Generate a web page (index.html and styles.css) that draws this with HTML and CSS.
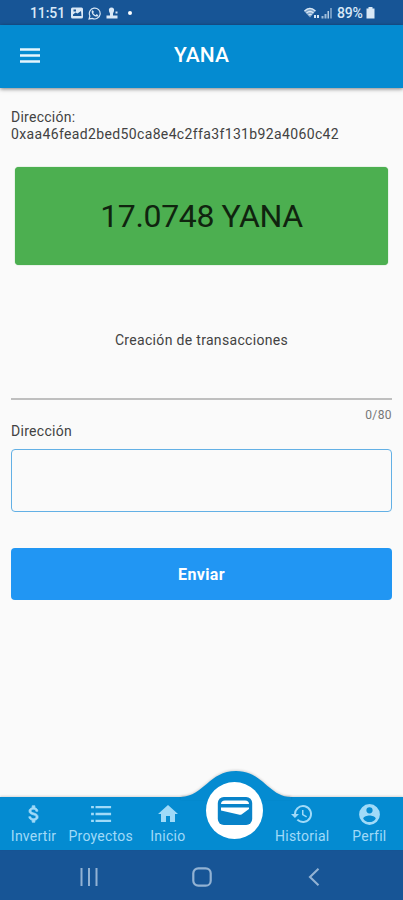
FILE: index.html
```
<!DOCTYPE html>
<html lang="es">
<head>
<meta charset="utf-8">
<title>YANA</title>
<link rel="stylesheet" href="styles.css">
</head>
<body>
<div class="screen">
  <div class="status">
    <span class="clock">11:51</span>
    <svg class="i-image" viewBox="0 0 24 24" width="12" height="12"><path fill="currentColor" fill-rule="evenodd" d="M3 1h18a3 3 0 0 1 3 3v16a3 3 0 0 1-3 3H3a3 3 0 0 1-3-3V4a3 3 0 0 1 3-3zm1 17h17l-1-10-7 5-4-2-5 4zM5 5v4h5V5z"/></svg>
    <svg class="i-chat" viewBox="0 0 24 24" width="13" height="13"><path d="M2 22l1.500-5.500A10 10 0 1 1 8 21z" fill="none" stroke="currentColor" stroke-width="2.200"/><path d="M7 7l2-1 2 3-1.500 2c1 2 2.500 3 4.500 4l2-2 3 2c-1 4-5 3-8 1S6 11 7 7z" fill="currentColor"/></svg>
    <svg class="i-person" viewBox="0 0 26 24" width="13" height="12"><path fill="currentColor" d="M11 1c4 0 6 3 5 7-.4 2-2 4-2 6v3h9v6H1v-6h7v-3c0-2-2-4-2-6-1-4 1-7 5-7zM19 9h4v4h-4z"/></svg>
    <span class="dot"></span>
    <div class="status-right">
      <svg viewBox="0 0 32 24" width="16" height="12"><path d="M0 8Q11-5 23 8L12 21z" fill="currentColor" opacity=".55"/><path d="M1 8Q12-3 23 8M5 12q7-6 14 0M9 16q4-3 6 0" fill="none" stroke="currentColor" stroke-width="2.500"/><path d="M20 16h4v6h-4zM26 16h4v6h-4z" fill="currentColor"/></svg>
      <svg viewBox="0 0 22 24" width="11" height="12"><g fill="currentColor"><path opacity=".7" d="M1 18h4v5H1zM7 14h4v9H7z"/><path opacity=".8" d="M13 8h3v15h-3z"/><path opacity=".45" d="M18 2h4v21h-4z"/></g></svg>
      <span class="percent">89%</span>
      <svg viewBox="0 0 18 24" width="9" height="12"><path fill="currentColor" d="M5 0h8v3h4v20H1V3h4z"/></svg>
    </div>
  </div>
  <header class="appbar">
    <svg class="menu" viewBox="0 0 20 15" width="20" height="15"><path d="M0 1.500h20M0 7.500h20M0 13.500h20" stroke="currentColor" stroke-width="2.400"/></svg>
    <h1>YANA</h1>
  </header>
  <main>
    <p class="address">Dirección:<br><span>0xaa46fead2bed50ca8e4c2ffa3f131b92a4060c42</span></p>
    <div class="balance"><span>17.0748 YANA</span></div>
    <h2>Creación de transacciones</h2>
    <div class="line"></div>
    <div class="counter">0/80</div>
    <div class="label">Dirección</div>
    <div class="field"></div>
    <div class="send"><span>Enviar</span></div>
  </main>
  <nav class="tabs">
    <svg class="hump" viewBox="0 0 110 30" width="110" height="30"><path d="M0 27C23 26 28 1 55 1s32 25 55 26v3H0z" fill="#048bd1"/></svg>
    <div class="tab"><svg viewBox="0 0 24 24" width="22" height="22"><path fill="currentColor" stroke="currentColor" stroke-width=".8" d="M11.800 10.900c-2.270-.59-3-1.200-3-2.150 0-1.090 1.010-1.850 2.700-1.850 1.780 0 2.440.85 2.500 2.100h2.210c-.07-1.720-1.120-3.300-3.210-3.810V3h-3v2.160c-1.940.42-3.500 1.680-3.500 3.610 0 2.310 1.910 3.460 4.700 4.130 2.500.6 3 1.480 3 2.410 0 .69-.49 1.790-2.700 1.790-2.060 0-2.870-.92-2.980-2.100h-2.200c.12 2.190 1.760 3.420 3.680 3.830V21h3v-2.150c1.950-.37 3.500-1.500 3.500-3.550 0-2.840-2.430-3.810-4.700-4.400z"/></svg><span>Invertir</span></div>
    <div class="tab"><svg viewBox="0 0 24 24" width="22" height="22"><path d="M1.200 4.500h3M1.200 12h3M1.200 19.500h3M6 4.500h17M6 12h17M6 19.500h17" stroke="currentColor" stroke-width="2.500"/></svg><span>Proyectos</span></div>
    <div class="tab"><svg viewBox="0 0 24 24" width="24" height="24"><path fill="currentColor" d="M10 20v-6h4v6h5v-8h3L12 3 2 12h3v8z"/></svg><span>Inicio</span></div>
    <div class="tab"><div class="disc"><svg viewBox="0 0 36 30" width="36" height="30"><rect x=".8" y="1" width="34.400" height="28" rx="6" fill="#0883c9"/><path d="M4 8q0-3.500 4-3.500h20q4 0 4 3.500zM4 11.500h28v1.500l-7.500 5.500q-1.500.6-3 0L4 14.500z" fill="#fff"/></svg></div></div>
    <div class="tab"><svg viewBox="0 0 24 24" width="24" height="24"><path fill="currentColor" d="M13 3a9 9 0 0 0-9 9H1l3.890 3.890.07.14L9 12H6a7 7 0 1 1 2.060 4.940l-1.420 1.420A9 9 0 1 0 13 3zm-1 5v5l4.280 2.540.72-1.210-3.500-2.080V8z"/></svg><span>Historial</span></div>
    <div class="tab"><svg viewBox="0 0 24 24" width="25" height="25"><path fill="currentColor" d="M12 2a10 10 0 1 0 0 20 10 10 0 0 0 0-20zm0 3a3 3 0 1 1 0 6 3 3 0 0 1 0-6zm0 14.200a7.200 7.200 0 0 1-6-3.220c.03-1.990 4-3.080 6-3.080s5.970 1.090 6 3.080a7.200 7.200 0 0 1-6 3.220z"/></svg><span>Perfil</span></div>
  </nav>
  <div class="system">
    <svg viewBox="0 0 18 18" width="18" height="18"><path d="M1.500 0v18M9 0v18M16.500 0v18" stroke="currentColor" stroke-width="2"/></svg>
    <svg viewBox="0 0 20 20" width="20" height="20"><rect x="1.300" y="1.300" width="17.400" height="17.400" rx="5" fill="none" stroke="currentColor" stroke-width="2.200"/></svg>
    <svg viewBox="0 0 12 18" width="12" height="18"><path d="M10.500.8L2 9l8.500 8.200" fill="none" stroke="currentColor" stroke-width="2.100"/></svg>
  </div>
</div>
</body>
</html>
```
FILE: styles.css
```
* { box-sizing: border-box; }
body { margin: 0; font-family: Roboto, sans-serif; background: #fafafa; }
svg { display: block; flex: none; }
.screen { width: 403px; height: 900px; display: flex; flex-direction: column; background: #fafafa; overflow: hidden; }

.status { height: 25px; flex: none; background: #175596; color: #d9e8f6; display: flex; align-items: center; padding: 1px 28px 0 30px; }
.clock { font-size: 14px; font-weight: 500; width: 35px; letter-spacing: -.1px; margin-right: 6px; }
.i-chat { margin-left: 5px; }
.i-person { margin-left: 5px; }
.dot { width: 4px; height: 4px; border-radius: 50%; background: #fff; margin-left: 9px; }
.status-right { margin-left: auto; display: flex; align-items: center; }
.status-right svg:nth-child(2) { margin-left: 1px; }
.percent { font-size: 14px; font-weight: 500; width: 28px; margin: 0 1px 0 5px; letter-spacing: -.2px; }

.appbar { height: 63px; flex: none; background: #048bd1; color: #fff; display: flex; align-items: center; padding: 0 20px; box-shadow: 0 1px 4px rgba(0, 0, 0, .5); }
.menu { color: #e4f5fd; margin-top: -2px; }
h1 { flex: 1; margin: -3px 20px 0 0; text-align: center; font-size: 21px; line-height: 24px; font-weight: 500; letter-spacing: .1px; }

main { flex: 1; padding: 21px 11px 0; color: #424242; }
.address { margin: 0; font-size: 14px; line-height: 17px; letter-spacing: .25px; white-space: nowrap; }
.address span { letter-spacing: .36px; }
.balance { height: 98px; margin: 24px 4px 0; border-radius: 4px; background: #4caf50; color: #10240f; display: flex; align-items: center; justify-content: center; font-size: 32px; letter-spacing: -.36px; box-shadow: 0 0 1px #4caf50; }
h2 { margin: 66px 0 0; font-size: 14px; line-height: 18px; font-weight: 400; letter-spacing: .32px; text-align: center; }
.line { height: 2px; background: #bfbfbf; margin-top: 49px; }
.counter { font-size: 12px; line-height: 14px; margin-top: 8px; text-align: right; letter-spacing: .4px; color: #777; }
.label { font-size: 14px; line-height: 18px; letter-spacing: .3px; }
.field { height: 63px; margin-top: 9px; border: 1px solid #63b0e5; border-radius: 4px; }
.send { height: 52px; margin-top: 36px; border-radius: 4px; background: #2196f3; color: #fff; display: flex; align-items: center; justify-content: center; font-size: 16px; font-weight: 700; letter-spacing: .35px; }

.tabs { height: 53px; flex: none; background: #048bd1; color: #a0daf8; display: grid; grid-template-columns: repeat(6, 1fr); position: relative; box-shadow: 0 -1px 2px rgba(0, 0, 0, .15); }
.hump { position: absolute; left: 180.500px; top: -27px; filter: drop-shadow(0 -1px 1px rgba(0, 0, 0, .15)); }
.tab { display: grid; grid-template-rows: 34px 19px; justify-items: center; align-items: center; position: relative; font-size: 14px; }
.tab span { line-height: 18px; margin-top: -9px; letter-spacing: .25px; }
.disc { width: 57px; height: 57px; border-radius: 50%; background: #fff; display: flex; align-items: center; justify-content: center; position: absolute; left: 5px; top: -15px; }

.system { height: 50px; flex: none; background: #175596; color: #92b2d3; display: grid; grid-template-columns: 178px 47px 178px; align-items: center; justify-items: center; padding-top: 3px; }
```
